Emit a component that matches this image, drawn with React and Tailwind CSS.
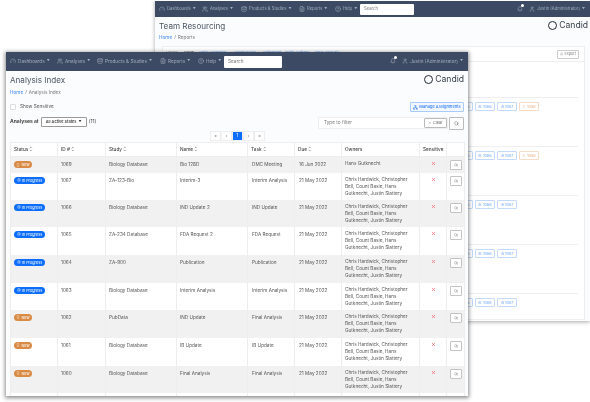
import React from 'react';
import { Gauge, Users, Database, FileText, HelpCircle, Bell, User, ChevronUp, ChevronDown, Search, X, Lightbulb, Settings, Download, Network } from 'lucide-react';

const OWNERS = 'Chris Hardwick, Christopher Bell, Count Basie, Hans Gutknecht, Justin Slattery';

const rows = [
  { status: 'New', id: '1069', study: 'Biology Database', name: 'Bio 128D', task: 'DMC Meeting', due: '16 Jun 2022', owners: 'Hans Gutknecht', h: 'h-[16px]' },
  { status: 'In Progress', id: '1067', study: 'ZA-123-Bio', name: 'Interim-3', task: 'Interim Analysis', due: '21 May 2022', owners: OWNERS, h: 'h-[27px]' },
  { status: 'In Progress', id: '1066', study: 'Biology Database', name: 'IND Update 2', task: 'IND Update', due: '21 May 2022', owners: OWNERS, h: 'h-[27px]' },
  { status: 'In Progress', id: '1065', study: 'ZA-234 Database', name: 'FDA Request 2', task: 'FDA Request', due: '21 May 2022', owners: OWNERS, h: 'h-[28px]' },
  { status: 'In Progress', id: '1064', study: 'ZA-900', name: 'Publication', task: 'Publication', due: '21 May 2022', owners: OWNERS, h: 'h-[28px]' },
  { status: 'In Progress', id: '1063', study: 'Biology Database', name: 'Interim Analysis', task: 'Interim Analysis', due: '21 May 2022', owners: OWNERS, h: 'h-[27px]' },
  { status: 'New', id: '1062', study: 'PubData', name: 'IND Update', task: 'Final Analysis', due: '21 May 2022', owners: OWNERS, h: 'h-[28px]' },
  { status: 'New', id: '1061', study: 'Biology Database', name: 'IB Update', task: 'IB Update', due: '21 May 2022', owners: OWNERS, h: 'h-[28px]' },
  { status: 'New', id: '1060', study: 'Biology Database', name: 'Final Analysis', task: 'Final Analysis', due: '21 May 2022', owners: OWNERS, h: 'h-[27px]' },
];

const headers = [
  { label: 'Status', w: 'w-[47px]', sort: true },
  { label: 'ID #', w: 'w-[48px]', sort: true },
  { label: 'Study', w: 'w-[71px]', sort: true },
  { label: 'Name', w: 'w-[71px]', sort: true },
  { label: 'Task', w: 'w-[47px]', sort: true },
  { label: 'Due', w: 'w-[47px]', sort: true },
  { label: 'Owners', w: 'w-[78px]' },
  { label: 'Sensitive', w: 'w-[27px]' },
  { label: '', w: 'w-[18px]' },
];

const navItems = [
  { icon: Gauge, label: 'Dashboards', w: 'w-[47px]', ws: 'w-[43px]' },
  { icon: Users, label: 'Analyses', w: 'w-[40px]', ws: 'w-[39px]' },
  { icon: Database, label: 'Products & Studies', w: 'w-[63px]', ws: 'w-[58px]' },
  { icon: FileText, label: 'Reports', w: 'w-[38px]', ws: 'w-[36px]' },
  { icon: HelpCircle, label: 'Help', w: 'w-[26px]', ws: 'w-[25px]' },
];

function Logo() {
  return (
    <div className="flex items-center gap-[2px] mt-[1px]">
      <span className="block w-[9px] h-[9px] rounded-full border-[1.5px] border-[#1f2937]" />
      <span className="text-[8.6px] leading-none text-[#333b47]">Candid</span>
    </div>
  );
}

function NavBar({ small }) {
  return (
    <div className={`flex items-center bg-[#3c4a63] text-[#a3adbd] px-[4px] ${small ? 'text-[4.2px] h-[16px]' : 'text-[4.7px] h-[19px]'}`}>
      {navItems.map((item) => (
        <div key={item.label} className={`flex items-center gap-[2px] whitespace-nowrap ${small ? item.ws : item.w}`}>
          <item.icon className="w-[6px] h-[6px]" />
          <span>{item.label}</span>
          <span className="text-[3px]">▼</span>
        </div>
      ))}
      <div className={`bg-white rounded-[1px] text-[#777] px-[4px] flex items-center ${small ? 'w-[54px] h-[11px]' : 'w-[58px] h-[12px]'}`}>Search</div>
      <div className="ml-auto flex items-center gap-[6px] pr-[1px]">
        <div className="relative">
          <Bell className="w-[6px] h-[6px]" />
          <span className="absolute -top-[2px] -right-[1px] w-[3px] h-[3px] rounded-full bg-white" />
        </div>
        <div className="flex items-center gap-[2px]">
          <User className="w-[6px] h-[6px]" />
          <span>Justin (Administrator)</span>
          <span className="text-[3px]">▼</span>
        </div>
      </div>
    </div>
  );
}

function StatusBadge({ status }) {
  if (status === 'New') {
    return (
      <span className="flex items-center justify-center gap-[1px] w-[18px] h-[7px] rounded-full bg-[#d98a45] text-white text-[3.8px]">
        <Lightbulb className="w-[4px] h-[4px]" />
        New
      </span>
    );
  }
  return (
    <span className="flex items-center justify-center gap-[1px] w-[31px] h-[7px] rounded-full bg-[#0d6efd] text-white text-[3.8px]">
      <Settings className="w-[4px] h-[4px]" />
      In Progress
    </span>
  );
}

function SmallTag({ label, orange }) {
  return (
    <span className={`inline-flex items-center gap-[1px] w-[20px] h-[9px] justify-center border rounded-[1px] text-[3.8px] ${orange ? 'border-[#f6dcc5] text-[#e3a878]' : 'border-[#c3dafc] text-[#6ea5f5]'}`}>
      {orange ? <Lightbulb className="w-[3.5px] h-[3.5px]" /> : <Settings className="w-[3.5px] h-[3.5px]" />}
      {label}
    </span>
  );
}

function BackWindow() {
  const rowsBack = [true, true, false, false, false];
  return (
    <div className="absolute left-[155px] top-0 w-[435px] h-[321px] bg-[#fbfcfd] shadow-[0_1px_4px_rgba(0,0,0,0.35)] pt-[1px]">
      <NavBar small />
      <div className="flex items-start justify-between pl-[4px] pr-[2px] pt-[3px] h-[29px]">
        <div>
          <div className="text-[8.1px] leading-[12px] text-[#4b5563]">Team Resourcing</div>
          <div className="text-[4.7px] leading-[7px] mt-[2px] text-[#777]">
            <span className="text-[#3b82f6]">Home</span><span className="mx-[2px]">/</span>Reports
          </div>
        </div>
        <Logo />
      </div>
      <div className="ml-[7px] mr-[5px] h-[274px] bg-white border border-[#eeeeee]">
        <div className="h-[15px] flex items-center border-b border-[#eeeeee] pl-[3px] pr-[5px] text-[3.8px] whitespace-nowrap">
          <div className="flex items-center -translate-y-[1px]">
            <span className="w-[18px] text-[#888]">Labels</span>
            <span className="w-[15px] text-[#444]">Show</span>
            <span className="w-[35px] text-[#60a5fa]">Chris Hardwick</span>
            <span className="w-[29px] text-[#60a5fa]">Count Basie</span>
            <span className="w-[52px] text-[#60a5fa]">Gutknecht, Justin Slattery</span>
            <span className="w-[28px] text-[#60a5fa]">Final Analysis</span>
          </div>
          <span className="ml-auto flex items-center gap-[1px] w-[22px] h-[9px] justify-center border border-[#ccc] rounded-[1px] text-[#888]">
            <Download className="w-[3.5px] h-[3.5px]" />
            Export
          </span>
        </div>
        <div className="h-[36px] mr-[6px] border-b border-[#eeeeee]" />
        {rowsBack.map((orange, i) => (
          <div key={i} className={`mr-[6px] flex gap-[2px] pt-[4px] pl-[290px] ${i < 4 ? 'h-[49px] border-b border-[#eeeeee]' : 'h-[26px]'}`}>
            <SmallTag label="1085" />
            <SmallTag label="1086" />
            <SmallTag label="1087" />
            {orange && <SmallTag label="1058" orange />}
          </div>
        ))}
      </div>
    </div>
  );
}

function FrontWindow() {
  return (
    <div className="absolute left-[6px] top-[52px] w-[462px] h-[344px] bg-[#fbfcfd] shadow-[0_1px_4px_1px_rgba(0,0,0,0.45)] overflow-hidden">
      <NavBar />
      <div className="flex items-start justify-between px-[4px] pt-[3px]">
        <div>
          <div className="text-[8.1px] leading-[12px] text-[#4b5563]">Analysis Index</div>
          <div className="text-[4.7px] leading-[7px] mt-[3px] text-[#777]">
            <span className="text-[#3b82f6]">Home</span><span className="mx-[2px]">/</span>Analysis Index
          </div>
        </div>
        <Logo />
      </div>
      <div className="flex items-center justify-between px-[4px] mt-[6px]">
        <div className="flex items-center gap-[4px] text-[4.7px] text-[#555]">
          <span className="w-[6px] h-[6px] border border-[#ddd] bg-white rounded-[1px]" />
          Show Sensitive
        </div>
        <div className="flex items-center gap-[1px] w-[54px] h-[10px] justify-center border border-[#a9cbfb] bg-[#f3f8ff] rounded-[1px] text-[4px] font-medium text-[#2f7cf6] whitespace-nowrap">
          <Network className="w-[5px] h-[5px]" />
          Manage Assignments
        </div>
      </div>
      <div className="flex items-start justify-between px-[4px] mt-[5px]">
        <div className="flex items-center gap-[2px] text-[5px] text-[#444] h-[10px]">
          <span className="font-bold">Analyses at</span>
          <span className="flex items-center justify-center gap-[2px] w-[46px] h-[10px] border border-[#999] rounded-[1px] bg-white text-[3.9px] font-semibold whitespace-nowrap">
            All Active States <span className="text-[3px]">▼</span>
          </span>
          <span>(11)</span>
        </div>
        <div className="flex items-start gap-[1px]">
          <div className="w-[130px] h-[12px] bg-white border border-[#eee] rounded-[1px] flex items-center justify-between pl-[5px] text-[4.7px] text-[#777]">
            Type to filter
            <span className="flex items-center justify-center gap-[1px] w-[23px] h-[10px] border border-[#bbb] bg-white rounded-[1px] text-[3.9px] text-[#666]">
              <X className="w-[3.5px] h-[3.5px]" />
              Clear
            </span>
          </div>
          <div className="w-[15px] h-[13px] flex items-center justify-center border border-[#bbb] bg-white rounded-[1px]">
            <Search className="w-[5px] h-[5px] text-[#555]" />
          </div>
        </div>
      </div>
      <div className="flex justify-center h-[10px] mt-[1px] mb-[1px] pl-[1px] text-[4.5px] text-[#777]">
        {['«', '‹', '1', '›', '»'].map((p) => (
          <span key={p} className={`w-[11px] h-[10px] flex items-center justify-center border border-[#eee] ${p === '1' ? 'bg-[#0d6efd] text-white border-[#0d6efd]' : 'bg-white'}`}>{p}</span>
        ))}
      </div>
      <div className="px-[4px]">
        <table className="table-fixed w-[454px] border-collapse text-[4.7px] text-[#555] bg-white">
          <thead>
            <tr className="h-[14px] border-b border-[#dddddd]">
              {headers.map((h) => (
                <th key={h.label} className={`${h.w} border border-[#eeeeee] px-[3px] text-left font-medium text-[#444] whitespace-nowrap`}>
                  <span className="flex items-center gap-[1px]">
                    {h.label}
                    {h.sort && (
                      <span className="flex flex-col">
                        <ChevronUp className="w-[3.5px] h-[3px]" strokeWidth={4} />
                        <ChevronDown className="w-[3.5px] h-[3px]" strokeWidth={4} />
                      </span>
                    )}
                  </span>
                </th>
              ))}
            </tr>
          </thead>
          <tbody>
            {rows.map((row, i) => (
              <tr key={row.id} className={`${row.h} ${i % 2 === 0 ? 'bg-[#f1f1f1]' : 'bg-white'}`}>
                <td className="border-x border-[#eeeeee] px-[3px] pt-[4px] align-top leading-[7px]"><StatusBadge status={row.status} /></td>
                <td className="border-x border-[#eeeeee] px-[3px] pt-[4px] align-top leading-[6px]">{row.id}</td>
                <td className="border-x border-[#eeeeee] px-[3px] pt-[4px] align-top leading-[6px]">{row.study}</td>
                <td className="border-x border-[#eeeeee] px-[3px] pt-[4px] align-top leading-[6px]">{row.name}</td>
                <td className="border-x border-[#eeeeee] px-[4px] pt-[4px] align-top leading-[6px] whitespace-nowrap">{row.task}</td>
                <td className="border-x border-[#eeeeee] px-[4px] pt-[4px] align-top leading-[6px] whitespace-nowrap">{row.due}</td>
                <td className="border-x border-[#eeeeee] px-[3px] pt-[3px] align-top leading-[7px]">{row.owners}</td>
                <td className="border-x border-[#eeeeee] pt-[4px] align-top">
                  <X className="w-[5px] h-[5px] mx-auto text-[#ee5a64]" strokeWidth={3} />
                </td>
                <td className="border-x border-[#eeeeee] pt-[3px] align-top">
                  <span className="flex items-center justify-center w-[12px] h-[10px] mx-auto border border-[#c4c4c4] rounded-[1px] bg-white">
                    <Search className="w-[4px] h-[4px] text-[#666]" />
                  </span>
                </td>
              </tr>
            ))}
            <tr className="h-[4px]">
              {headers.map((h) => (
                <td key={h.label} className="border-x border-[#eeeeee]" />
              ))}
            </tr>
          </tbody>
        </table>
      </div>
    </div>
  );
}

export default function App() {
  return (
    <div className="relative w-[590px] h-[402px] bg-white overflow-hidden font-['Inter',sans-serif] blur-[0.3px]">
      <BackWindow />
      <FrontWindow />
    </div>
  );
}
